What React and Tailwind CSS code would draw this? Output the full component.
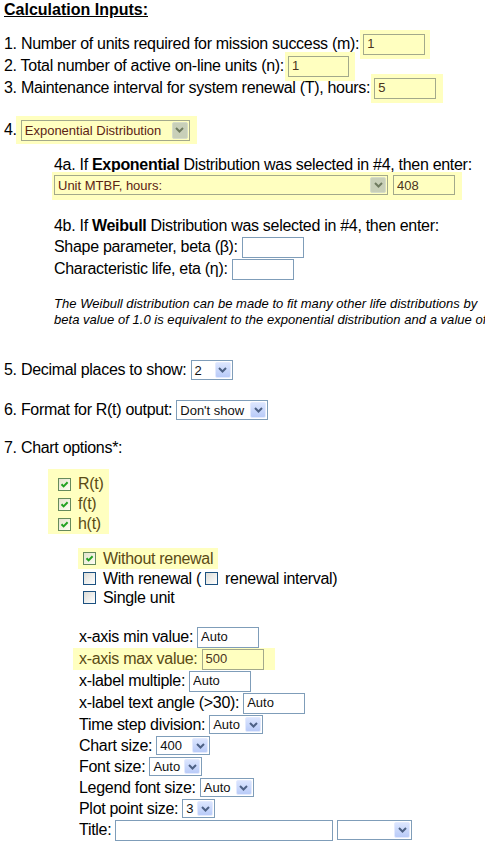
import React from "react";

// XP-era form widgets, drawn with spans so every browser gives the same look
function Chevron({ hl }) {
  return (
    <svg width="9" height="6" viewBox="0 0 9 6">
      <path d="M1 1 L4.5 4.5 L8 1" fill="none" stroke={hl ? "#6f7b5f" : "#4d6185"} strokeWidth="2" />
    </svg>
  );
}

function Select({ value = "", hl = false, className = "" }) {
  return (
    <div
      className={`flex shrink-0 items-stretch p-[1px] border tracking-normal ${
        hl ? "border-[#a3a98b] bg-[#ffffc0] text-[#5c2414]" : "border-[#7f9db9] bg-white text-[#111]"
      } ${className}`}
    >
      <span className="flex-1 flex items-center pl-[2px] text-[13px] leading-none whitespace-nowrap overflow-hidden">
        {value}
      </span>
      <span
        className={`w-[16px] flex items-center justify-center rounded-[2px] border ${
          hl
            ? "bg-[#c8cfb8] border-[#d6dcc8]"
            : "bg-[linear-gradient(180deg,#dbe5fe,#b9cbf8)] border-[#e3eafe]"
        }`}
      >
        <Chevron hl={hl} />
      </span>
    </div>
  );
}

function Input({ value = "", hl = false, className = "" }) {
  return (
    <input
      readOnly
      value={value}
      className={`shrink-0 border pl-[3px] text-[13px] tracking-normal outline-none ${
        hl ? "border-[#a3a98b] bg-[#ffffc0] text-[#4a3420]" : "border-[#7f9db9] bg-white text-[#111]"
      } ${className}`}
    />
  );
}

function Check({ checked = false, hl = false }) {
  return (
    <span
      className={`w-[13px] h-[13px] shrink-0 border flex items-center justify-center ${
        hl
          ? "border-[#668a5c] bg-[linear-gradient(135deg,#e4e4cc,#fdfdf4)]"
          : "border-[#1c5180] bg-[linear-gradient(135deg,#dcdcd7,#ffffff)]"
      }`}
    >
      {checked && (
        <svg width="9" height="9" viewBox="0 0 9 9">
          <path d="M1.5 4.2 L3.6 6.4 L7.6 2.3" fill="none" stroke="#21a121" strokeWidth="2" />
        </svg>
      )}
    </span>
  );
}

function Row({ label, children, h = "h-[22px]" }) {
  return (
    <div className={`flex items-center gap-[4px] leading-[22px] whitespace-nowrap ${h}`}>
      <span>{label}</span>
      {children}
    </div>
  );
}

export default function App() {
  return (
    <div className="w-[485px] h-[847px] overflow-hidden bg-white pl-[4px] text-black text-[16px] tracking-[-0.3px] font-['Liberation_Sans',Arial,sans-serif]">
      <div className="leading-[20px] font-bold underline tracking-normal">Calculation Inputs:</div>

      <div className="mt-[13px]">
        <Row label="1. Number of units required for mission success (m):">
          <span className="flex bg-[#ffffc0] -my-[4px] py-[4px] -ml-[3px] pl-[3px] -mr-[5px] pr-[5px]">
            <Input hl value="1" className="w-[62px] h-[21px]" />
          </span>
        </Row>
        <Row label="2. Total number of active on-line units (n):">
          <span className="flex bg-[#ffffc0] -my-[4px] py-[4px] -ml-[3px] pl-[3px] -mr-[6px] pr-[6px]">
            <Input hl value="1" className="w-[61px] h-[21px]" />
          </span>
        </Row>
        <Row label="3. Maintenance interval for system renewal (T), hours:">
          <span className="flex bg-[#ffffc0] -my-[4px] py-[4px] -ml-[3px] pl-[3px] -mr-[7px] pr-[7px]">
            <Input hl value="5" className="w-[62px] h-[21px]" />
          </span>
        </Row>
      </div>

      <div className="mt-[19px] flex items-center h-[23px] leading-[22px]">
        <span>4.</span>
        <span className="flex bg-[#ffffc0] -my-[4px] pt-[4px] pb-[3px] -ml-[1px] pl-[5px] pr-[7px]">
          <Select hl value="Exponential Distribution" className="w-[169px] h-[21px]" />
        </span>
      </div>

      <div className="ml-[50px]">
        <div className="mt-[13px] h-[21px] leading-[21px] whitespace-nowrap">
          4a. If <b>Exponential</b> Distribution was selected in #4, then enter:
        </div>
        <div className="flex h-[20px]">
          <span className="flex gap-[5px] bg-[#ffffc0] -mt-[3px] pt-[3px] -mb-[5px] pb-[5px] -ml-[2px] pl-[2px] pr-[7px]">
            <Select hl value="Unit MTBF, hours:" className="w-[334px] h-[20px]" />
            <Input hl value="408" className="w-[62px] h-[20px]" />
          </span>
        </div>

        <div className="mt-[20px] h-[21px] leading-[21px] whitespace-nowrap">
          4b. If <b>Weibull</b> Distribution was selected in #4, then enter:
        </div>
        <Row label="Shape parameter, beta (β):">
          <Input className="w-[62px] h-[21px]" />
        </Row>
        <Row label="Characteristic life, eta (η):">
          <Input className="w-[62px] h-[21px]" />
        </Row>

        <p className="mt-[16px] text-[13px] leading-[16px] italic tracking-[0.03px] whitespace-nowrap">
          The Weibull distribution can be made to fit many other life distributions by
          <br />
          beta value of 1.0 is equivalent to the exponential distribution and a value of
        </p>
      </div>

      <div className="mt-[31px]">
        <Row label="5. Decimal places to show:">
          <Select value="2" className="w-[42px] h-[20px]" />
        </Row>
      </div>
      <div className="mt-[18px]">
        <Row label="6. Format for R(t) output:">
          <Select value="Don't show" className="w-[92px] h-[20px]" />
        </Row>
      </div>
      <div className="mt-[16px] h-[22px] leading-[22px]">7. Chart options*:</div>

      <div className="mt-[10px] ml-[44px] w-[61px] bg-[#ffffc0] pt-[5px] text-[#5a4a14]">
        {["R(t)", "f(t)", "h(t)"].map((l) => (
          <div key={l} className="flex items-center h-[20px] leading-[20px] pl-[10px] gap-[7px]">
            <Check checked hl />
            <span>{l}</span>
          </div>
        ))}
      </div>

      <div className="mt-[14px] ml-[74px] whitespace-nowrap">
        <div className="flex">
          <span className="flex items-center h-[21px] leading-[21px] gap-[7px] bg-[#ffffc0] pl-[5px] pr-[5px] text-[#5a4a14]">
            <Check checked hl />
            <span>Without renewal</span>
          </span>
        </div>
        <div className="flex items-center h-[19px] leading-[19px] pl-[5px]">
          <Check />
          <span className="ml-[7px]">With renewal (</span>
          <span className="ml-[4px]">
            <Check />
          </span>
          <span className="ml-[7px]">renewal interval)</span>
        </div>
        <div className="flex items-center h-[19px] leading-[19px] pl-[5px] gap-[7px]">
          <Check />
          <span>Single unit</span>
        </div>
      </div>

      <div className="mt-[19px] ml-[75px]">
        <Row label="x-axis min value:">
          <Input value="Auto" className="w-[62px] h-[21px]" />
        </Row>
        <div className="flex">
          <div className="flex items-center gap-[4px] h-[22px] leading-[22px] whitespace-nowrap bg-[#ffffc0] -ml-[6px] pl-[6px] pr-[11px] text-[#5a4a14]">
            <span>x-axis max value:</span>
            <Input hl value="500" className="w-[62px] h-[21px]" />
          </div>
        </div>
        <Row label="x-label multiple:">
          <Input value="Auto" className="w-[62px] h-[21px]" />
        </Row>
        <Row label="x-label text angle (>30):">
          <Input value="Auto" className="w-[62px] h-[21px]" />
        </Row>
        <Row label="Time step division:" h="h-[21px]">
          <Select value="Auto" className="w-[54px] h-[19px]" />
        </Row>
        <Row label="Chart size:" h="h-[21px]">
          <Select value="400" className="w-[54px] h-[19px]" />
        </Row>
        <Row label="Font size:" h="h-[21px]">
          <Select value="Auto" className="w-[53px] h-[19px]" />
        </Row>
        <Row label="Legend font size:" h="h-[21px]">
          <Select value="Auto" className="w-[54px] h-[19px]" />
        </Row>
        <Row label="Plot point size:" h="h-[21px]">
          <Select value="3" className="w-[33px] h-[19px]" />
        </Row>
        <Row label="Title:">
          <Input className="w-[218px] h-[21px]" />
          <Select className="w-[75px] h-[20px]" />
        </Row>
      </div>
    </div>
  );
}
